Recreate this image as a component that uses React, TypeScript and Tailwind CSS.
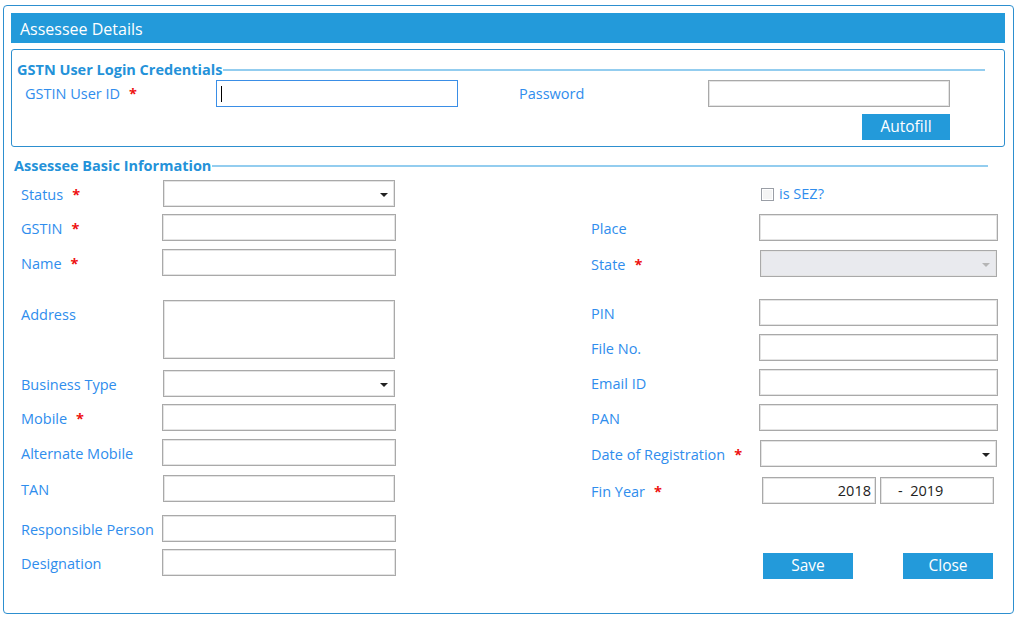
import React from 'react';

const font = { fontFamily: '"Open Sans", "Noto Sans", sans-serif' };

const Star = () => <span className="text-[#ee1111] font-bold ml-[9px]">*</span>;

const Arrow = ({ grey }: { grey?: boolean }) => (
  <span
    className={`absolute right-[6px] top-[12px] w-0 h-0 border-l-[4px] border-r-[4px] border-t-[4px] border-l-transparent border-r-transparent ${
      grey ? 'border-t-[#b5b5b5]' : 'border-t-[#222]'
    }`}
  />
);

const Box = ({ w, h = 27, select, grey, children }: { w: number | string; h?: number; select?: boolean; grey?: boolean; children?: React.ReactNode }) => (
  <div
    className={`relative border border-[#a9a9a9] shadow-[inset_0_0_0_1px_#e4e4e4] ${grey ? 'bg-[#e9eaee]' : 'bg-white'}`}
    style={{ width: w, height: h }}
  >
    {children}
    {select && <Arrow grey={grey} />}
  </div>
);

const Row = ({ label, req, labelW, mt, children }: { label: string; req?: boolean; labelW: number; mt: number; children: React.ReactNode }) => (
  <div className="flex items-start" style={{ marginTop: mt }}>
    <div className="text-[#2f8ded] text-[14.5px] h-[27px] leading-[29px] shrink-0 whitespace-nowrap" style={{ width: labelW }}>
      {label}
      {req && <Star />}
    </div>
    {children}
  </div>
);

const Legend = ({ title, pl, lineMr }: { title: string; pl: number; lineMr: number }) => (
  <div className="flex items-center" style={{ paddingLeft: pl, paddingRight: lineMr }}>
    <span className="text-[#2492d9] font-bold text-[14.5px] leading-[17px] whitespace-nowrap">{title}</span>
    <div className="flex-1 h-[2px] bg-[#93cdef] ml-[1px]" />
  </div>
);

const Btn = ({ label, w }: { label: string; w: number }) => (
  <button className="bg-[#239ada] text-white text-[15.5px] h-[26px]" style={{ width: w }}>
    {label}
  </button>
);

export default function App() {
  return (
    <div className="w-[1018px] h-[618px] bg-white pt-[5px] pl-[3px]" style={font}>
      <div className="w-[1011px] h-[609px] border border-[#2d8fcf] rounded-[4px] pt-[7px] px-[7px]">
        <div className="h-[30px] w-[994px] bg-[#239ada] text-white text-[16px] leading-[32px] pl-[9px]">Assessee Details</div>

        {/* GSTN login */}
        <div className="mt-[6px] w-[994px] h-[98px] border border-[#2d8fcf] rounded-[3px] pt-[11px]">
          <Legend title="GSTN User Login Credentials" pl={5} lineMr={19} />
          <div className="flex items-start mt-[2px]">
            <div className="w-[204px] pl-[13px] text-[#2f8ded] text-[14.5px] h-[27px] leading-[28px]">
              GSTIN User ID<Star />
            </div>
            <div className="w-[242px] h-[27px] border border-[#3a8ee6] bg-white flex items-center pl-[4px]">
              <span className="w-[1px] h-[16px] bg-black" />
            </div>
            <div className="w-[250px] pl-[61px] text-[#2f8ded] text-[14.5px] h-[27px] leading-[28px]">Password</div>
            <Box w={242} h={27} />
          </div>
          <div className="flex justify-end pr-[54px] mt-[7px]">
            <Btn label="Autofill" w={88} />
          </div>
        </div>

        {/* Basic info */}
        <div className="mt-[10px] -ml-[4px]">
          <Legend title="Assessee Basic Information" pl={7} lineMr={18} />
        </div>

        <div className="flex">
          <div className="w-[580px] pl-[10px]">
            <Row label="Status" req labelW={142} mt={6}>
              <Box w={232} select />
            </Row>
            <Row label="GSTIN" req labelW={141} mt={7}>
              <Box w={234} />
            </Row>
            <Row label="Name" req labelW={141} mt={8}>
              <Box w={234} />
            </Row>
            <Row label="Address" labelW={142} mt={24}>
              <Box w={232} h={59} />
            </Row>
            <Row label="Business Type" labelW={142} mt={11}>
              <Box w={232} select />
            </Row>
            <Row label="Mobile" req labelW={141} mt={7}>
              <Box w={234} />
            </Row>
            <Row label="Alternate Mobile" labelW={141} mt={8}>
              <Box w={234} />
            </Row>
            <Row label="TAN" labelW={142} mt={9}>
              <Box w={232} />
            </Row>
            <Row label="Responsible Person" labelW={141} mt={13}>
              <Box w={234} />
            </Row>
            <Row label="Designation" labelW={141} mt={7}>
              <Box w={234} />
            </Row>
          </div>

          <div className="flex-1">
            <div className="flex items-center mt-[13px] ml-[170px] h-[14px]">
              <span className="w-[13px] h-[13px] border border-[#9a9ea6] bg-[#f4f4f4] shadow-[inset_0_0_0_1px_#fff]" />
              <span className="ml-[5px] text-[#2f8ded] text-[14.5px]">is SEZ?</span>
            </div>
            <Row label="Place" labelW={168} mt={13}>
              <Box w={239} />
            </Row>
            <Row label="State" req labelW={169} mt={9}>
              <Box w={237} select grey />
            </Row>
            <Row label="PIN" labelW={168} mt={22}>
              <Box w={239} />
            </Row>
            <Row label="File No." labelW={168} mt={8}>
              <Box w={239} />
            </Row>
            <Row label="Email ID" labelW={168} mt={8}>
              <Box w={239} />
            </Row>
            <Row label="PAN" labelW={168} mt={8}>
              <Box w={239} />
            </Row>
            <Row label="Date of Registration" req labelW={169} mt={9}>
              <Box w={237} select />
            </Row>
            <Row label="Fin Year" req labelW={171} mt={10}>
              <div className="flex gap-[4px]">
                <div className="w-[114px] h-[27px] border border-[#a9a9a9] shadow-[inset_0_0_0_1px_#e4e4e4] text-right pr-[4px] text-[14.5px] leading-[25px] text-[#222]">2018</div>
                <div className="w-[114px] h-[27px] border border-[#a9a9a9] shadow-[inset_0_0_0_1px_#e4e4e4] pl-[17px] text-[14.5px] leading-[25px] text-[#222]">
                  -&nbsp;&nbsp;2019
                </div>
              </div>
            </Row>
            <div className="flex gap-[50px] ml-[172px] mt-[49px]">
              <Btn label="Save" w={90} />
              <Btn label="Close" w={90} />
            </div>
          </div>
        </div>
      </div>
    </div>
  );
}
